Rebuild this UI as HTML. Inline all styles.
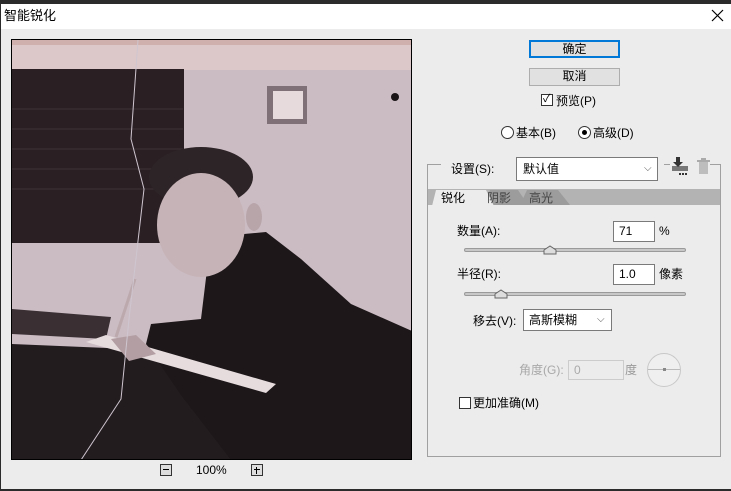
<!DOCTYPE html>
<html><head><meta charset="utf-8"><style>
*{margin:0;padding:0;box-sizing:border-box}
body{width:731px;height:491px;background:#2b2b2b;position:relative;overflow:hidden;font-family:"Liberation Sans","Noto Sans CJK SC",sans-serif;font-size:12px;color:#000}
.a{position:absolute}
.t{position:absolute;white-space:nowrap;line-height:14px}
.btn{position:absolute;background:#e1e1e1;border:1px solid #adadad;text-align:center;line-height:15px}
.inp{position:absolute;background:#fff;border:1px solid #7a7a7a;padding-left:5px;line-height:18px}
.track{position:absolute;height:4px;border-radius:2px;background:#c8c8c8;border:1px solid #9a9a9a}
.cb{position:absolute;width:12px;height:12px;border:1px solid #333;background:#fff}
</style></head><body>
<div class="a" style="left:1px;top:4px;width:730px;height:485px;background:#ececec"></div>
<div class="a" style="left:1px;top:4px;width:730px;height:25px;background:#fff"></div>
<div class="t" style="left:4px;top:8px;font-size:13px;line-height:16px">智能锐化</div>
<svg class="a" style="left:711px;top:9px" width="14" height="14"><path d="M1 1 L12 12 M12 1 L1 12" stroke="#000" stroke-width="1.2"/></svg>

<svg class="a" style="left:11px;top:39px" width="401" height="421" viewBox="0 0 401 421">
<rect x="0" y="0" width="401" height="421" fill="#cbbcc3"/>
<rect x="1" y="1" width="399" height="30" fill="#dcc8c9"/>
<rect x="1" y="1" width="399" height="5" fill="#cfb0ac"/>
<rect x="1" y="30" width="172" height="174" fill="#2a2024"/>
<g stroke="#3e3337" stroke-width="1"><line x1="1" y1="70" x2="172" y2="70"/><line x1="1" y1="90" x2="172" y2="90"/><line x1="1" y1="110" x2="172" y2="110"/><line x1="1" y1="130" x2="172" y2="130"/><line x1="1" y1="150" x2="172" y2="150"/></g>
<rect x="256" y="47" width="40" height="38" fill="#7e7076"/>
<rect x="262" y="52" width="30" height="28" fill="#e6dadc"/>
<circle cx="384" cy="58" r="4" fill="#1a1416"/>
<path d="M1 270 L100 278 L95 300 L1 295Z" fill="#3a3034"/>
<path d="M1 305 L120 310 L260 350 L401 380 L401 421 L1 421 Z" fill="#231c1f"/>
<path d="M200 198 L255 193 L290 220 L340 265 L401 292 L401 421 L220 421 L170 356 L135 305 L140 285 L190 280 Z" fill="#1d1719"/>
<ellipse cx="190" cy="138" rx="52" ry="30" fill="#2d2427"/>
<ellipse cx="190" cy="186" rx="44" ry="52" fill="#c6b3b7"/>
<ellipse cx="243" cy="178" rx="8" ry="14" fill="#b8a5aa"/>
<path d="M75 303 L95 296 L265 345 L255 354 Z" fill="#e6dcde"/>
<path d="M100 300 L125 296 L145 315 L118 322 Z" fill="#b29ea3"/>
<line x1="105" y1="298" x2="124" y2="240" stroke="#bba9ad" stroke-width="3"/>
<path d="M127 1 L120 100 L133 150 L118 280 L110 360 L70 421" stroke="#cfc6d0" stroke-width="1" fill="none"/>
<rect x="0.5" y="0.5" width="400" height="420" fill="none" stroke="#000"/>
</svg>

<div class="a" style="left:160px;top:464px;width:12px;height:12px;border:1px solid #333;background:#ddd"></div>
<div class="a" style="left:163px;top:469px;width:6px;height:1px;background:#000"></div>
<div class="t" style="left:196px;top:463px">100%</div>
<div class="a" style="left:251px;top:464px;width:12px;height:12px;border:1px solid #333;background:#ddd"></div>
<div class="a" style="left:254px;top:469px;width:6px;height:1px;background:#000"></div>
<div class="a" style="left:256px;top:467px;width:1px;height:7px;background:#000"></div>

<div class="btn" style="left:529px;top:40px;width:91px;height:18px;border:2px solid #0078d7;line-height:14px">确定</div>
<div class="btn" style="left:529px;top:68px;width:91px;height:18px">取消</div>
<div class="cb" style="left:541px;top:94px"></div>
<div class="t" style="left:543px;top:92px;font-size:11px">✓</div>
<div class="t" style="left:556px;top:94px">预览(P)</div>
<div class="a" style="left:501px;top:126px;width:13px;height:13px;border:1px solid #333;border-radius:50%;background:#fff"></div>
<div class="t" style="left:516px;top:126px">基本(B)</div>
<div class="a" style="left:578px;top:126px;width:13px;height:13px;border:1px solid #333;border-radius:50%;background:#fff"></div>
<div class="a" style="left:582px;top:130px;width:5px;height:5px;border-radius:50%;background:#000"></div>
<div class="t" style="left:593px;top:126px">高级(D)</div>

<div class="a" style="left:427px;top:164px;width:294px;height:293px;border:1px solid #a0a0a0;border-top:none"></div>
<div class="a" style="left:427px;top:164px;width:14px;height:1px;background:#a0a0a0"></div>
<div class="a" style="left:664px;top:164px;width:6px;height:1px;background:#a0a0a0"></div>
<div class="a" style="left:710px;top:164px;width:11px;height:1px;background:#a0a0a0"></div>
<div class="t" style="left:451px;top:162px">设置(S):</div>
<div class="inp" style="left:516px;top:157px;width:142px;height:24px;border-color:#7a7a7a;line-height:22px;padding-left:6px">默认值</div>
<div class="t" style="left:644px;top:162px;color:#555;font-size:10px">⌵</div>
<svg class="a" style="left:670px;top:157px" width="40" height="20">
<rect x="2" y="9" width="16" height="5" fill="#777"/><rect x="6" y="0" width="4" height="6" fill="#333"/><path d="M3 5 L13 5 L8 10Z" fill="#333"/>
<rect x="9" y="16" width="2" height="2" fill="#333"/><rect x="12" y="16" width="2" height="2" fill="#333"/><rect x="15" y="16" width="2" height="2" fill="#333"/>
<rect x="29" y="5" width="9" height="12" fill="#bdbdbd"/><rect x="27" y="3" width="13" height="2" fill="#aaa"/><rect x="31" y="1" width="5" height="2" fill="#aaa"/>
</svg>

<div class="a" style="left:428px;top:189px;width:292px;height:16px;background:#b3b3b3"></div>
<svg class="a" style="left:428px;top:189px" width="160" height="17">
<path d="M55 16 L62 1 L90 1 L100 16Z" fill="#9c9c9c"/>
<path d="M92 16 L99 1 L130 1 L142 16Z" fill="#9c9c9c"/>
<path d="M4 17 L8 1 L58 1 L66 17Z" fill="#ececec"/>
</svg>
<div class="t" style="left:441px;top:191px">锐化</div>
<div class="t" style="left:487px;top:191px;color:#444">阴影</div>
<div class="t" style="left:529px;top:191px;color:#444">高光</div>

<div class="t" style="left:457px;top:224px">数量(A):</div>
<div class="inp" style="left:613px;top:221px;width:42px;height:21px">71</div>
<div class="t" style="left:659px;top:224px">%</div>
<div class="track" style="left:464px;top:248px;width:222px"></div>
<svg class="a" style="left:543px;top:245px" width="14" height="10"><path d="M1 9 L1 5 L7 1 L13 5 L13 9Z" fill="#ddd" stroke="#666"/></svg>

<div class="t" style="left:457px;top:267px">半径(R):</div>
<div class="inp" style="left:613px;top:264px;width:42px;height:21px">1.0</div>
<div class="t" style="left:659px;top:267px">像素</div>
<div class="track" style="left:464px;top:292px;width:222px"></div>
<svg class="a" style="left:494px;top:289px" width="14" height="10"><path d="M1 9 L1 5 L7 1 L13 5 L13 9Z" fill="#ddd" stroke="#666"/></svg>

<div class="t" style="left:473px;top:314px">移去(V):</div>
<div class="inp" style="left:523px;top:309px;width:89px;height:22px;line-height:20px">高斯模糊</div>
<div class="t" style="left:597px;top:313px;color:#555;font-size:10px">⌵</div>

<div class="t" style="left:519px;top:363px;color:#a8a8a8">角度(G):</div>
<div class="inp" style="left:568px;top:360px;width:56px;height:20px;border-color:#ccc;background:#ececec;color:#aaa">0</div>
<div class="t" style="left:625px;top:363px;color:#999">度</div>
<div class="a" style="left:647px;top:353px;width:34px;height:34px;border:1px solid #c8c8c8;border-radius:50%;background:#efefef"></div>
<div class="a" style="left:648px;top:369px;width:32px;height:1px;background:#bbb"></div>
<div class="a" style="left:663px;top:368px;width:3px;height:3px;background:#888"></div>

<div class="cb" style="left:459px;top:397px"></div>
<div class="t" style="left:473px;top:396px">更加准确(M)</div>
</body></html>
